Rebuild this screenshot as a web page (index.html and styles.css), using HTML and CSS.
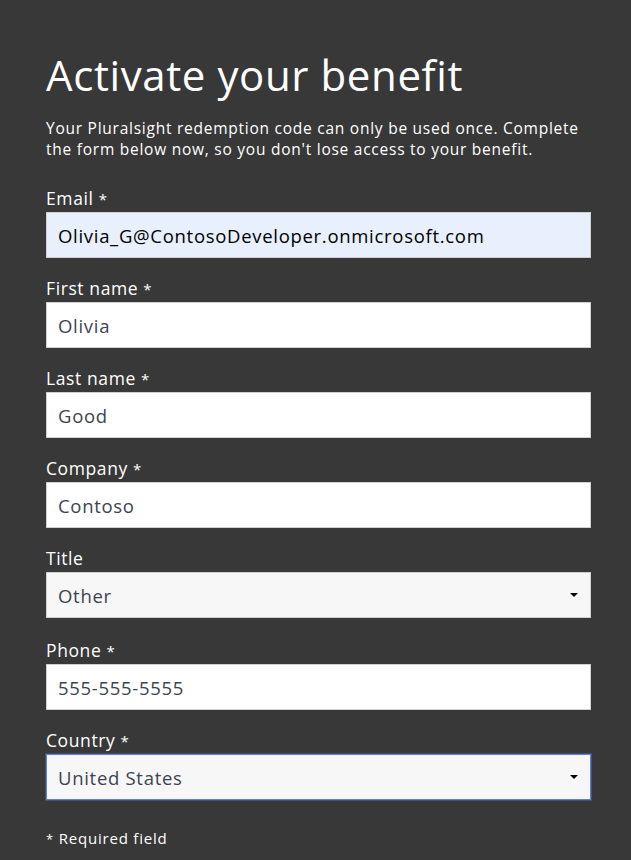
FILE: index.html
```html
<!DOCTYPE html>
<html lang="en">
<head>
<meta charset="utf-8">
<title>Activate your benefit</title>
<link rel="stylesheet" href="styles.css">
</head>
<body>
<main class="page">
  <h1 class="title">Activate your benefit</h1>
  <p class="intro">Your Pluralsight redemption code can only be used once. Complete the form below now, so you don't lose access to your benefit.</p>
  <form class="form">
    <div class="field">
      <label class="label">Email <span class="req">*</span></label>
      <div class="control control-autofill">Olivia_G@ContosoDeveloper.onmicrosoft.com</div>
    </div>
    <div class="field">
      <label class="label">First name <span class="req">*</span></label>
      <div class="control">Olivia</div>
    </div>
    <div class="field">
      <label class="label">Last name <span class="req">*</span></label>
      <div class="control">Good</div>
    </div>
    <div class="field">
      <label class="label">Company <span class="req">*</span></label>
      <div class="control">Contoso</div>
    </div>
    <div class="field field-select">
      <label class="label">Title</label>
      <div class="control control-select">Other</div>
    </div>
    <div class="field">
      <label class="label">Phone <span class="req">*</span></label>
      <div class="control">555-555-5555</div>
    </div>
    <div class="field">
      <label class="label">Country <span class="req">*</span></label>
      <div class="control control-select control-focus">United States</div>
    </div>
    <p class="note"><span class="req">*</span> Required field</p>
  </form>
</main>
</body>
</html>
```
FILE: styles.css
```css
html, body {
  margin: 0;
  padding: 0;
  background: #383838;
}
body {
  font-family: "Open Sans", "Liberation Sans", sans-serif;
  color: #ffffff;
}
.page {
  padding: 50px 40px 0 46px;
}
.title {
  margin: 0;
  font-size: 42px;
  font-weight: 400;
  line-height: 50px;
  letter-spacing: 0.6px;
}
.intro {
  margin: 18px 0 0;
  font-size: 15.5px;
  line-height: 21px;
  letter-spacing: 0.75px;
  padding-right: 4px;
}
.form {
  margin-top: 27px;
}
.field {
  display: flex;
  flex-direction: column;
  margin-bottom: 19px;
}
.field-select {
  margin-bottom: 21px;
}
.label {
  height: 22px;
  font-size: 17.5px;
  line-height: 22px;
  margin-bottom: 3px;
  letter-spacing: 0.6px;
}
.req {
  font-size: 15px;
  line-height: 1;
}
.control {
  position: relative;
  height: 44px;
  display: flex;
  align-items: center;
  padding: 0 11px;
  background: #ffffff;
  border: 1px solid #cfcfcf;
  color: #3d4450;
  font-size: 18.5px;
  letter-spacing: 0.7px;
}
.control-autofill {
  background: #e8f0fe;
  color: #000000;
}
.control-select {
  background: #f7f7f7;
}
.control-select::after {
  content: "";
  position: absolute;
  right: 12px;
  top: 50%;
  margin-top: -2px;
  border-left: 4px solid transparent;
  border-right: 4px solid transparent;
  border-top: 4px solid #000000;
}
.control-focus {
  border-color: #5b80dc;
  box-shadow: 0 0 0 1px rgba(91, 128, 220, 0.35);
}
.note {
  margin: 28px 0 0;
  font-size: 15px;
  line-height: 20px;
  letter-spacing: 0.8px;
}
.note .req {
  font-size: 13px;
}
```
